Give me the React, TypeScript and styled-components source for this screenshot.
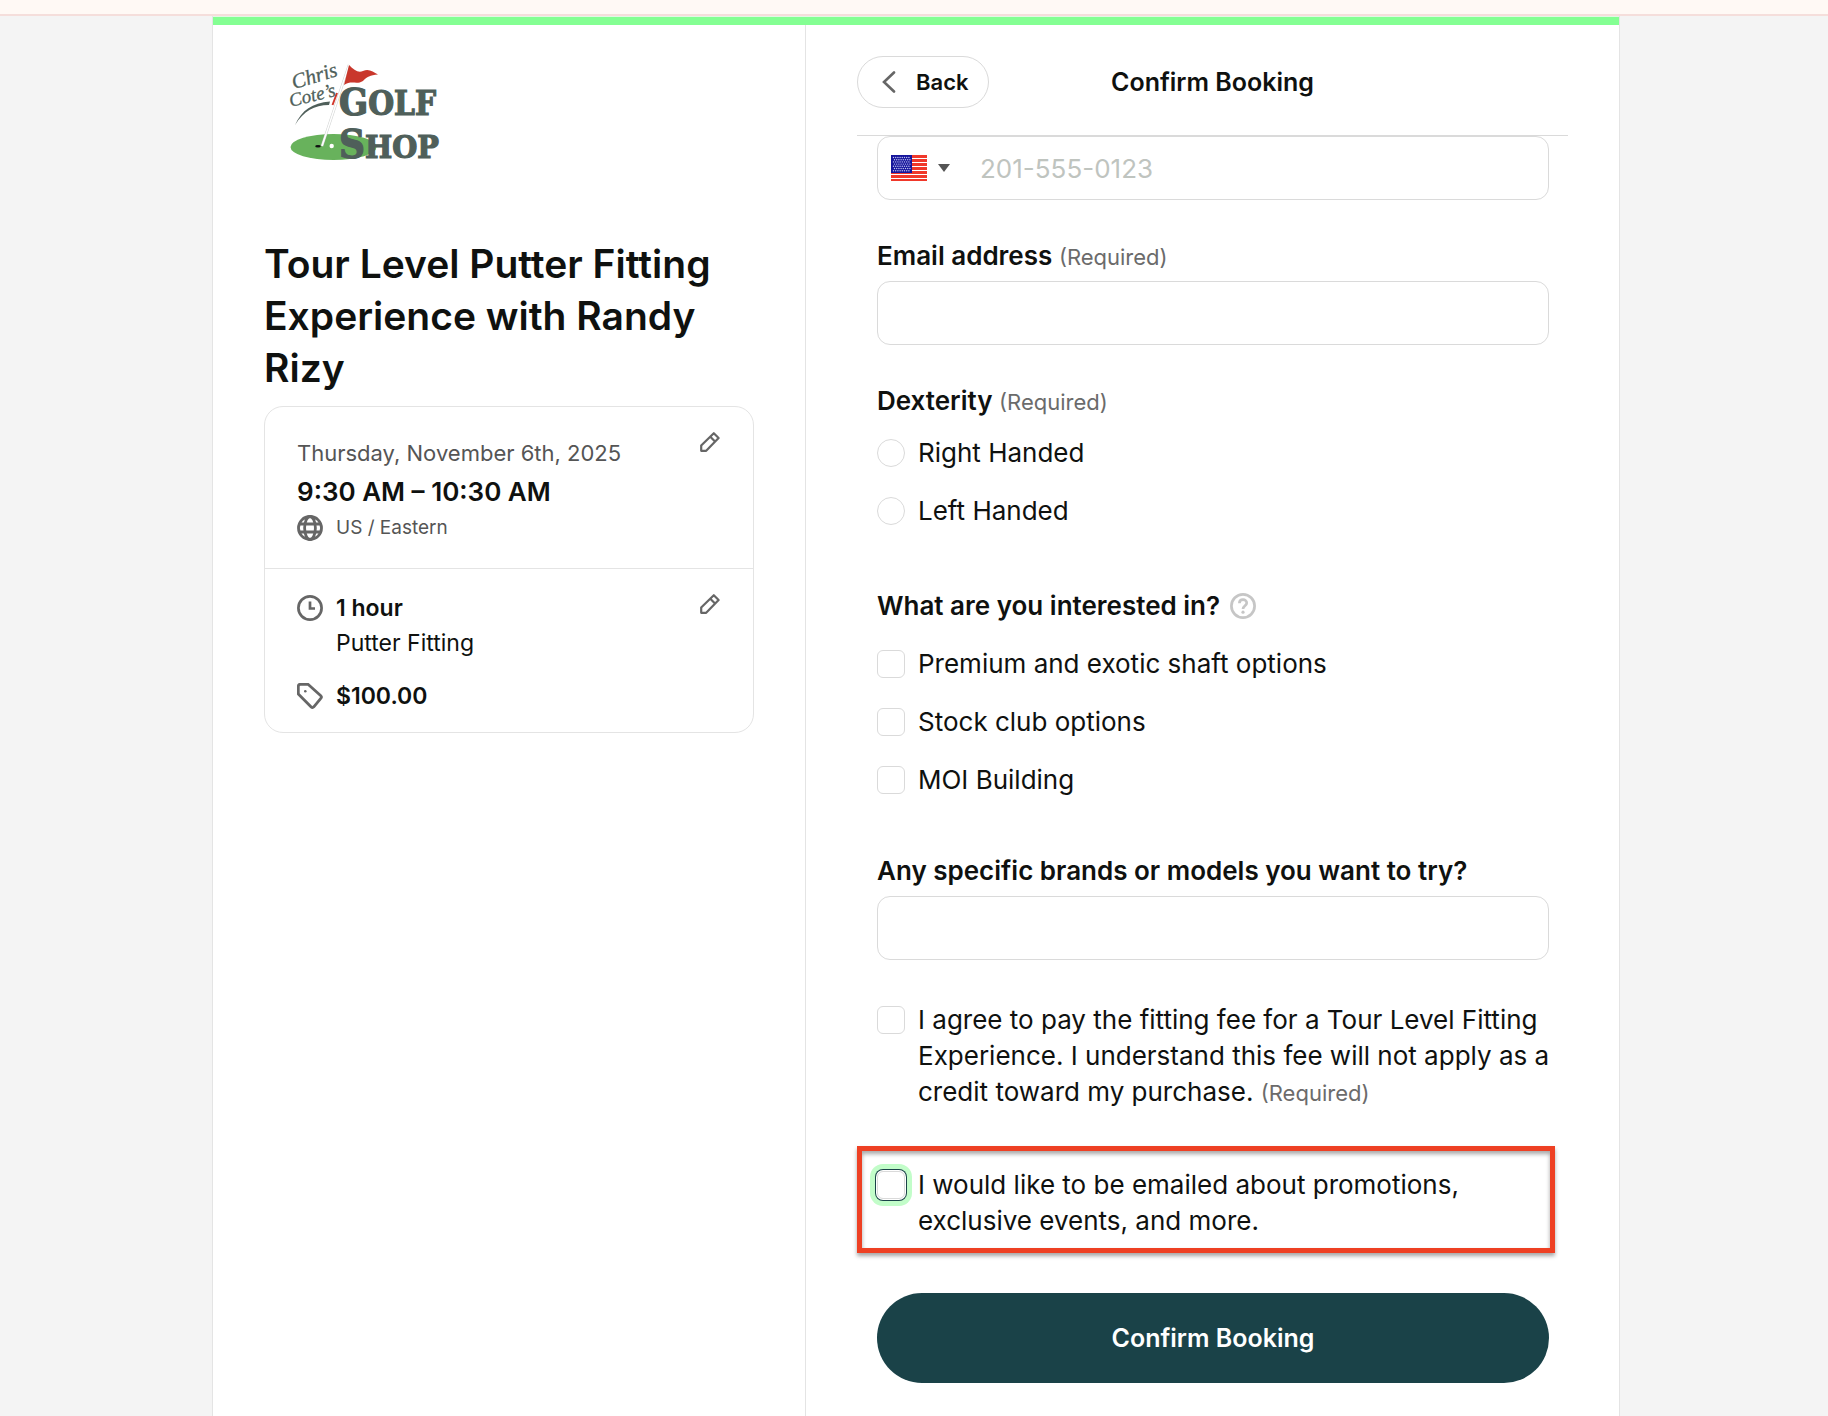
import React, { useState } from 'react';
import styled, { createGlobalStyle, css } from 'styled-components';

const ink = '#0f110f';
const muted = '#6b6b6b';
const line = '#dadada';

const GlobalStyle = createGlobalStyle`
  *, *::before, *::after { box-sizing: border-box; }
  body {
    margin: 0;
    background: #f4f4f4;
    color: ${ink};
    font-family: Inter, "Liberation Sans", sans-serif;
    font-size: 26px;
  }
  button, input, select { font: inherit; color: inherit; }
  h1, h2, p { margin: 0; }
`;

const Page = styled.div`
  min-height: 100vh;
  display: flex;
  flex-direction: column;
`;

const Notice = styled.div`
  height: 16px;
  background: #fff9f5;
  border-bottom: 2px solid #f5dedb;
`;

const Shell = styled.main`
  flex: 1;
  display: flex;
  flex-direction: column;
  margin: 0 208px 0 212px;
  border: solid #e4e4e4;
  border-width: 0 1px;
  background: #fff;
`;

const Accent = styled.div`
  height: 9px;
  border-top: 1px solid #e3f7e4;
  background: #84ff93;
`;

const Columns = styled.div`
  flex: 1;
  display: grid;
  grid-template-columns: 593fr 813fr;
`;

const Summary = styled.aside`
  padding: 39px 51px;
  border-right: 1px solid #e4e4e4;
`;

const Logo = styled.svg`
  display: block;
  overflow: visible;
  margin: 0 0 76px 26px;
`;

const Heading = styled.h1`
  margin-bottom: 12px;
  font-size: 39px;
  line-height: 52px;
  font-weight: 600;
`;

const Card = styled.div`
  border: 1px solid #e4e4e4;
  border-radius: 19px;
`;

const Section = styled.section`
  display: flex;
  justify-content: space-between;
  align-items: flex-start;
  padding: 25px 33px 22px 32px;

  & + & { border-top: 1px solid #e4e4e4; }
`;

const When = styled.div`
  padding: 5px 0;
`;

const DateText = styled.p`
  font-size: 22px;
  line-height: 32px;
  color: #555;
`;

const TimeText = styled.p`
  font-size: 26px;
  line-height: 46px;
  font-weight: 600;
`;

const Row = styled.div<{ $gap?: boolean }>`
  display: flex;
  align-items: center;
  gap: 13px;
  margin-top: ${(p) => (p.$gap ? '18px' : '0')};
  font-size: 23px;
  line-height: 28px;
  font-weight: 600;

  svg { display: block; }
`;

const Zone = styled(Row)`
  font-size: 19px;
  line-height: 26px;
  font-weight: 400;
  color: #555;
`;

const Service = styled.p`
  padding-left: 39px;
  font-size: 23px;
  line-height: 42px;
`;

const EditButton = styled.button`
  display: block;
  padding: 0;
  border: 0;
  background: none;
  cursor: pointer;

  svg { display: block; }
`;

const Booking = styled.div`
  padding: 0 51px 33px;
`;

const Header = styled.header`
  display: grid;
  grid-template-columns: 1fr auto 1fr;
  align-items: center;
  padding: 31px 0 27px;
  border-bottom: 1px solid ${line};
`;

const BackButton = styled.button`
  justify-self: start;
  display: flex;
  align-items: center;
  gap: 20px;
  height: 52px;
  padding: 0 20px 0 24px;
  border: 1px solid ${line};
  border-radius: 26px;
  background: #fff;
  font-size: 22px;
  font-weight: 600;
  cursor: pointer;
`;

const Title = styled.h2`
  font-size: 25px;
  line-height: 36px;
  font-weight: 600;
`;

const Form = styled.form`
  padding: 0 19px 0 20px;
`;

const boxed = css`
  width: 100%;
  height: 64px;
  border: 1px solid ${line};
  border-radius: 13px;
  background: #fff;
`;

const PhoneBox = styled.div`
  ${boxed}
  display: flex;
  align-items: center;
  margin-bottom: 38px;
`;

const Country = styled.label`
  position: relative;
  display: flex;
  align-items: center;
  gap: 11px;
  padding: 0 14px 0 13px;

  select {
    position: absolute;
    inset: 0;
    width: 100%;
    opacity: 0;
    cursor: pointer;
  }
`;

const PhoneInput = styled.input`
  flex: 1;
  min-width: 0;
  height: 60px;
  padding: 0 16px;
  border: 0;
  border-radius: 13px;
  background: none;
  outline: none;

  &::placeholder { color: #bfc4bf; opacity: 1; }
`;

const TextInput = styled.input`
  ${boxed}
  display: block;
  padding: 0 16px;
  outline: none;
`;

const Field = styled.div<{ $after: number }>`
  margin-bottom: ${(p) => p.$after}px;
`;

const labelText = css`
  line-height: 36px;
  font-weight: 600;
`;

const FieldLabel = styled.label`
  ${labelText}
  display: block;
  margin-bottom: 7px;
`;

const Required = styled.span`
  font-size: 22px;
  line-height: 28px;
  font-weight: 400;
  color: ${muted};
`;

const Group = styled.fieldset<{ $after: number }>`
  min-width: 0;
  margin: 0 0 ${(p) => p.$after}px;
  padding: 0;
  border: 0;
`;

const Legend = styled.legend<{ $after: number }>`
  ${labelText}
  display: flex;
  align-items: center;
  gap: 10px;
  padding: 0;
  margin-bottom: ${(p) => p.$after}px;

  svg { display: block; }
`;

const Options = styled.div`
  display: flex;
  flex-direction: column;
  gap: 22px;
`;

const Option = styled.label`
  display: flex;
  align-items: flex-start;
  gap: 13px;
  line-height: 36px;
  cursor: pointer;
`;

const Consent = styled.span`
  flex: 1;
  margin-right: -8px;
`;

const Tick = styled.input<{ $ring?: boolean }>`
  flex: none;
  appearance: none;
  width: 28px;
  height: 28px;
  margin: 4px 0;
  border: 1px solid ${line};
  border-radius: ${(p) => (p.type === 'radio' ? '50%' : '6px')};
  background: #fff;
  outline: none;

  &:checked { background: #1a4248; box-shadow: inset 0 0 0 6px #fff; }

  ${(p) =>
    p.$ring &&
    css`
      box-shadow: 0 0 0 1px #fff, 0 0 0 2px #1a4248, 0 0 0 7px #c2fdc9;
    `}
`;

const Highlight = styled.div`
  margin: 36px -6px 40px -20px;
  padding: 16px 15px 9px;
  border: 5px solid #ee4023;
  box-shadow: 0 3px 4px rgba(0, 0, 0, 0.35), inset 0 3px 4px rgba(0, 0, 0, 0.35);
`;

const Submit = styled.button`
  display: block;
  width: 100%;
  height: 90px;
  border: 0;
  border-radius: 45px;
  background: #1a4248;
  color: #fff;
  font-size: 25px;
  font-weight: 600;
  cursor: pointer;
`;

const LogoMark = () => (
  <Logo width="150" height="98" viewBox="0 0 150 98" role="img" aria-label="Chris Cote's Golf Shop">
    <ellipse cx="43.5" cy="83" rx="43" ry="13" fill="#68b25c" />
    <path d="M59 1L32 82" stroke="#c9cccb" strokeWidth="2.4" />
    <path d="M59 1L32 82" stroke="#fff" strokeWidth="1.6" />
    <path d="M47 29L42.500 41" stroke="#d2362b" strokeWidth="2" />
    <path d="M59 1C64 6 68 9 73 7C79 4 83 8 88 10.500C80 11 77 13 73 17C67 21 61 16 54 21Z" fill="#c9372c" />
    <path d="M5 61C12 46 22 39 40 37.500L39 41C24 41 14 47 5 61Z" fill="#4f5f5a" />
    <ellipse cx="28" cy="82.300" rx="2.800" ry="1.300" fill="#111" />
    <circle cx="41.700" cy="82" r="2.200" fill="#fff" />
    <g fill="#4f5f5a" stroke="#4f5f5a">
      <g fontFamily="'Liberation Serif', serif" fontStyle="italic" fontSize="21" strokeWidth="0.3">
        <text transform="rotate(-17 5 25)" x="4" y="25">Chris</text>
        <text transform="rotate(-14 1 44)" x="1" y="43" fontSize="19">Cote’s</text>
      </g>
      <g fontFamily="'DejaVu Serif Condensed', 'DejaVu Serif', serif" fontWeight="700" strokeWidth="1.2">
        <text x="49" y="51" fontSize="38">G<tspan fontSize="33">OLF</tspan></text>
        <text x="49" y="94" fontSize="40">S<tspan fontSize="32">HOP</tspan></text>
      </g>
    </g>
  </Logo>
);

const PencilIcon = () => (
  <svg width="20" height="20" viewBox="0 0 20 20" fill="none" stroke="#666" strokeWidth="2.2" strokeLinejoin="round" aria-hidden="true">
    <path d="M1.200 18.800V13.500L13.800 1.200L18.600 6L6.200 18.800Z M10.300 4.800L15 9.500" />
  </svg>
);

const GlobeIcon = () => (
  <svg width="26" height="26" viewBox="0 0 26 26" fill="none" stroke="#666" strokeWidth="2.8" aria-hidden="true">
    <circle cx="13" cy="13" r="11.500" />
    <ellipse cx="13" cy="13" rx="5.400" ry="11.500" />
    <path d="M2.500 9H23.500M2.500 17H23.500" />
  </svg>
);

const ClockIcon = () => (
  <svg width="26" height="26" viewBox="0 0 26 26" fill="none" stroke="#666" aria-hidden="true">
    <circle cx="13" cy="13" r="11.600" strokeWidth="2.700" />
    <path d="M13 6.500V13.500H18" strokeWidth="2.700" />
  </svg>
);

const TagIcon = () => (
  <svg width="26" height="26" viewBox="0 0 26 26" fill="none" stroke="#666" strokeWidth="2.800" strokeLinejoin="round" aria-hidden="true">
    <path d="M1.300 3.500Q1.300 1.300 3.500 1.300H11L23.800 12.700Q25.200 14 23.800 15.300L16.800 23.800Q15.500 25.200 14.200 23.900L1.300 11Z" />
    <circle cx="8.300" cy="8.300" r="1.300" fill="#666" stroke="none" />
  </svg>
);

const HelpIcon = () => (
  <svg width="26" height="26" viewBox="0 0 26 26" fill="none" stroke="#c6c6c6" strokeWidth="2.700" aria-hidden="true">
    <circle cx="13" cy="13" r="11.600" />
    <path d="M9.400 10.200C9.400 5.500 16.700 5.700 16.700 9.900C16.700 12.600 13 12.800 13 16" />
    <circle cx="13" cy="19.200" r="1.600" fill="#c6c6c6" stroke="none" />
  </svg>
);

const Flag = () => (
  <svg width="36" height="26" viewBox="0 0 36 26" aria-hidden="true">
    <rect width="36" height="26" fill="#fff" />
    {[0, 1, 2, 3, 4, 5, 6].map((i) => (
      <rect key={i} y={i * 4} width="36" height="3" fill="#f0382a" />
    ))}
    <rect width="21" height="18" fill="#15159c" />
    {Array.from({ length: 7 }, (_, r) =>
      Array.from({ length: 8 }, (_, c) => (
        <circle key={`${r}-${c}`} cx={2.500 + c * 2.200 + (r % 2)} cy={2.500 + r * 2.200} r="0.700" fill="#c5c5f0" />
      )),
    )}
  </svg>
);

const interests = ['Premium and exotic shaft options', 'Stock club options', 'MOI Building'];

export default function App() {
  const [hand, setHand] = useState('');
  return (
    <Page>
      <GlobalStyle />
      <Notice />
      <Shell>
        <Accent />
        <Columns>
          <Summary>
            <LogoMark />
            <Heading>Tour Level Putter Fitting Experience with Randy Rizy</Heading>
            <Card>
              <Section>
                <When>
                  <DateText>Thursday, November 6th, 2025</DateText>
                  <TimeText>9:30 AM – 10:30 AM</TimeText>
                  <Zone><GlobeIcon />US / Eastern</Zone>
                </When>
                <EditButton type="button" aria-label="Edit time"><PencilIcon /></EditButton>
              </Section>
              <Section>
                <div>
                  <Row><ClockIcon />1 hour</Row>
                  <Service>Putter Fitting</Service>
                  <Row $gap><TagIcon />$100.00</Row>
                </div>
                <EditButton type="button" aria-label="Edit service"><PencilIcon /></EditButton>
              </Section>
            </Card>
          </Summary>
          <Booking>
            <Header>
              <BackButton type="button">
                <svg width="14" height="22" viewBox="0 0 14 22" fill="none" stroke="#666" strokeWidth="2.600" strokeLinecap="round" aria-hidden="true">
                  <path d="M12 1.500L2 11L12 20.500" />
                </svg>
                Back
              </BackButton>
              <Title>Confirm Booking</Title>
            </Header>
            <Form onSubmit={(e) => e.preventDefault()}>
              <PhoneBox>
                <Country>
                  <Flag />
                  <svg width="12" height="8" viewBox="0 0 12 8" aria-hidden="true"><path d="M0 0H12L6 8Z" fill="#555" /></svg>
                  <select aria-label="Country" defaultValue="us">
                    <option value="us">United States</option>
                  </select>
                </Country>
                <PhoneInput type="tel" aria-label="Phone number" placeholder="201-555-0123" />
              </PhoneBox>
              <Field $after={38}>
                <FieldLabel htmlFor="email">Email address <Required>(Required)</Required></FieldLabel>
                <TextInput id="email" type="email" />
              </Field>
              <Group $after={59}>
                <Legend $after={16}><span>Dexterity <Required>(Required)</Required></span></Legend>
                <Options>
                  {['Right Handed', 'Left Handed'].map((name) => (
                    <Option key={name}>
                      <Tick type="radio" name="dexterity" checked={hand === name} onChange={() => setHand(name)} />
                      {name}
                    </Option>
                  ))}
                </Options>
              </Group>
              <Group $after={55}>
                <Legend $after={22}>What are you interested in?<HelpIcon /></Legend>
                <Options>
                  {interests.map((name) => (
                    <Option key={name}><Tick type="checkbox" />{name}</Option>
                  ))}
                </Options>
              </Group>
              <Field $after={42}>
                <FieldLabel htmlFor="brands">Any specific brands or models you want to try?</FieldLabel>
                <TextInput id="brands" type="text" />
              </Field>
              <Option>
                <Tick type="checkbox" />
                <Consent>
                  I agree to pay the fitting fee for a Tour Level Fitting Experience. I understand this fee will not apply as a
                  credit toward my purchase. <Required>(Required)</Required>
                </Consent>
              </Option>
              <Highlight>
                <Option>
                  <Tick type="checkbox" $ring />
                  <Consent>I would like to be emailed about promotions, exclusive events, and more.</Consent>
                </Option>
              </Highlight>
              <Submit type="submit">Confirm Booking</Submit>
            </Form>
          </Booking>
        </Columns>
      </Shell>
    </Page>
  );
}
